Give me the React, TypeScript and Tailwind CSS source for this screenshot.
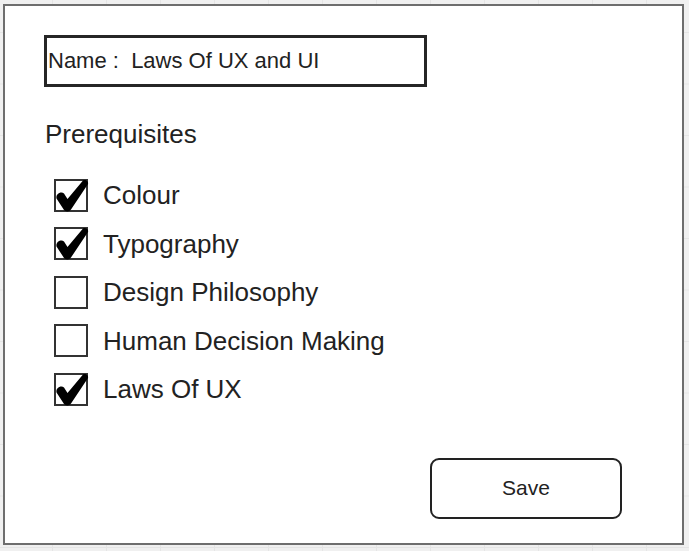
import React from 'react';

const items = [
  { label: 'Colour', checked: true },
  { label: 'Typography', checked: true },
  { label: 'Design Philosophy', checked: false },
  { label: 'Human Decision Making', checked: false },
  { label: 'Laws Of UX', checked: true },
];

function CheckMark() {
  return (
    <svg
      className="absolute left-[-2px] top-[-2px] overflow-visible"
      width="34"
      height="33"
      viewBox="0 0 34 33"
    >
      <path
        d="M2.5 19.5 C1.5 15 7 12 10 14.5 L13.5 20 L29 1.5 C31 0 35 2 34 5 L17 30.5 C15.5 33 11.5 33 10 31 Z"
        fill="#000"
      />
    </svg>
  );
}

export default function App() {
  return (
    <div
      className="w-[689px] h-[551px] bg-[#f0f0f0] bg-[linear-gradient(to_right,#e5e5e5_1px,transparent_1px),linear-gradient(to_bottom,#e5e5e5_1px,transparent_1px)] bg-[size:54px_51.5px] bg-[position:-2px_32px] pl-[3px] pt-[4px] overflow-hidden"
      style={{ fontFamily: '"Liberation Sans", Arial, sans-serif' }}
    >
      <div className="w-[681px] h-[541px] border-2 border-[#6e6e6e] bg-white flex flex-col text-[#222]">
        {/* Name field */}
        <div className="ml-[39px] mt-[29px] w-[383px] h-[52px] border-[3px] border-[#262626] flex items-center pl-[1px]">
          <span className="text-[22px] leading-none whitespace-pre">Name :  Laws Of UX and UI</span>
        </div>

        <div className="ml-[40px] mt-[34px] text-[26px] leading-none">Prerequisites</div>

        {/* Checklist */}
        <div className="ml-[49px] mt-[24px] flex flex-col">
          {items.map((item) => (
            <div key={item.label} className="h-[48.5px] flex items-center gap-[15px]">
              <div className="relative w-[34px] h-[33px] border-2 border-[#333] bg-white shrink-0">
                {item.checked && <CheckMark />}
              </div>
              <span className="text-[26px] leading-none">{item.label}</span>
            </div>
          ))}
        </div>

        {/* Save button */}
        <button className="self-end mr-[60px] mt-[44px] w-[192px] h-[61px] border-2 border-[#222] rounded-[9px] bg-white text-[21px] text-[#222]">
          Save
        </button>
      </div>
    </div>
  );
}
